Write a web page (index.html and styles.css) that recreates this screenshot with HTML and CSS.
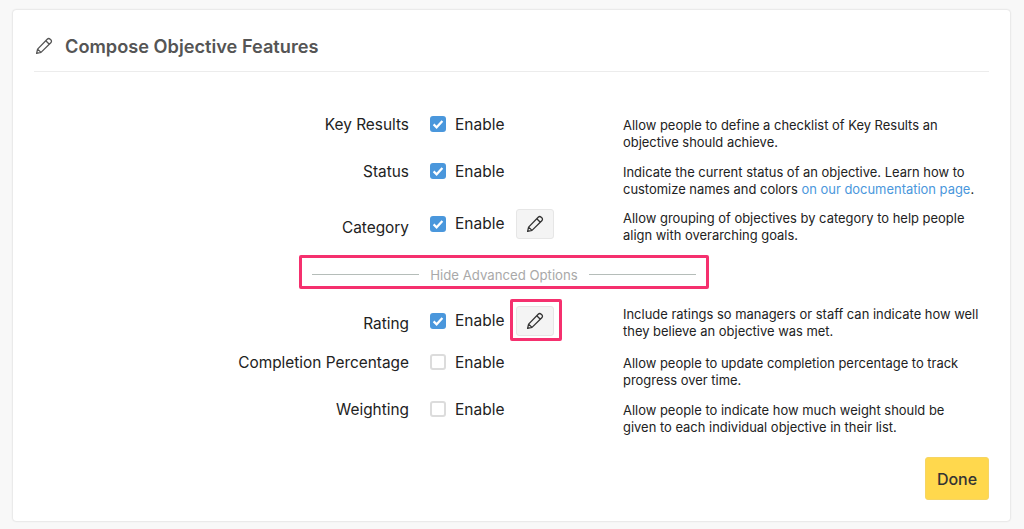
FILE: index.html
```html
<!DOCTYPE html>
<html lang="en">
<head>
    <meta charset="UTF-8">
    <title>Compose Objective Features</title>
    <link rel="stylesheet" href="styles.css">
</head>
<body>
    <svg class="icon-defs" width="0" height="0">
        <symbol id="pencil" viewBox="0 0 18 18">
            <path d="M1.6 16.4l1-4.3L12.2 2.2c.9-.9 2.1-.9 3 0l.6.6c.9.9.9 2.1 0 3L6 15.4z M2.6 12.1l3.4 3.3 M10.8 3.7l3.5 3.5" fill="none" stroke="currentColor" stroke-width="1.3" stroke-linejoin="round"/>
        </symbol>
        <symbol id="tick" viewBox="0 0 16 16">
            <path d="M3.6 8.4l3 2.9 5.8-6.4" fill="none" stroke="#fff" stroke-width="2.2"/>
        </symbol>
    </svg>
    <div class="card">
        <div class="card-header">
            <svg class="header-icon"><use href="#pencil"/></svg>
            <h1 class="card-title">Compose Objective Features</h1>
        </div>

        <div class="features">
            <div class="feature">
                <div class="feature-name">Key Results</div>
                <div class="feature-control">
                    <span class="checkbox checked"><svg><use href="#tick"/></svg></span>
                    <span class="enable">Enable</span>
                </div>
                <p class="feature-text">Allow people to define a checklist of Key Results an objective should achieve.</p>
            </div>
            <div class="feature status-row">
                <div class="feature-name">Status</div>
                <div class="feature-control">
                    <span class="checkbox checked"><svg><use href="#tick"/></svg></span>
                    <span class="enable">Enable</span>
                </div>
                <p class="feature-text">Indicate the current status of an objective. Learn how to customize names and colors <a href="#">on our documentation page</a>.</p>
            </div>
            <div class="feature has-edit">
                <div class="feature-name">Category</div>
                <div class="feature-control">
                    <span class="checkbox checked"><svg><use href="#tick"/></svg></span>
                    <span class="enable">Enable</span>
                    <button class="edit-button"><svg><use href="#pencil"/></svg></button>
                </div>
                <p class="feature-text">Allow grouping of objectives by category to help people align with overarching goals.</p>
            </div>

            <div class="advanced">
                <div class="advanced-toggle">
                    <span class="advanced-line"></span>
                    <span class="advanced-label">Hide Advanced Options</span>
                    <span class="advanced-line"></span>
                </div>
            </div>

            <div class="feature has-edit rating-row">
                <div class="feature-name">Rating</div>
                <div class="feature-control">
                    <span class="checkbox checked"><svg><use href="#tick"/></svg></span>
                    <span class="enable">Enable</span>
                    <button class="edit-button marked"><svg><use href="#pencil"/></svg></button>
                </div>
                <p class="feature-text">Include ratings so managers or staff can indicate how well they believe an objective was met.</p>
            </div>
            <div class="feature">
                <div class="feature-name">Completion Percentage</div>
                <div class="feature-control">
                    <span class="checkbox"></span>
                    <span class="enable">Enable</span>
                </div>
                <p class="feature-text">Allow people to update completion percentage to track progress over time.</p>
            </div>
            <div class="feature">
                <div class="feature-name">Weighting</div>
                <div class="feature-control">
                    <span class="checkbox"></span>
                    <span class="enable">Enable</span>
                </div>
                <p class="feature-text">Allow people to indicate how much weight should be<br>given to each individual objective in their list.</p>
            </div>
        </div>

        <div class="card-footer">
            <button class="done-button">Done</button>
        </div>
    </div>
</body>
</html>
```
FILE: styles.css
```css
html, body {
    height: 100%;
}
body {
    font-family: 'Inter', sans-serif;
    margin: 0;
    padding: 10px 14px 8px 13px;
    box-sizing: border-box;
    background-color: #f8f8f8;
    color: #222;
    overflow: hidden;
}
.icon-defs {
    position: absolute;
}
.card {
    height: 511px;
    box-sizing: border-box;
    padding: 0 21px;
    background-color: #fff;
    border-radius: 3px;
    box-shadow: 0 0 2px rgba(0,0,0,0.22);
}
.card-header {
    display: flex;
    align-items: center;
    height: 62px;
    box-sizing: border-box;
    padding-top: 10px;
    border-bottom: 1px solid #ececec;
}
.header-icon {
    width: 18px;
    height: 18px;
    margin-left: 1px;
    margin-right: 12px;
    color: #555;
}
.card-title {
    margin: 0;
    font-size: 18.2px;
    font-weight: 600;
    color: #555;
}
.features {
    padding-top: 45px;
}
.feature {
    display: grid;
    grid-template-columns: 375px 214px 1fr;
    height: 47px;
}
.status-row {
    height: 46px;
}
.rating-row {
    height: 49px;
}
.feature-name {
    margin-top: -4px;
    text-align: right;
    font-size: 15.4px;
    line-height: 24px;
}
.feature-control {
    display: flex;
    align-items: flex-start;
    margin-top: -4px;
    padding-left: 21px;
}
.has-edit .feature-control {
    margin-top: -1px;
    align-items: center;
    height: 30px;
}
.has-edit .feature-name {
    margin-top: 6px;
}
.rating-row .feature-control {
    margin-top: 0;
}
.checkbox {
    display: block;
    width: 16px;
    height: 16px;
    margin-top: 3px;
    box-sizing: border-box;
    border: 2px solid #dcdcdc;
    border-radius: 3px;
    background-color: #fff;
}
.has-edit .checkbox {
    margin-top: 0;
}
.checkbox.checked {
    border: 0;
    background-color: #4a97dc;
}
.checkbox svg {
    display: block;
    width: 16px;
    height: 16px;
}
.enable {
    margin-left: 9px;
    font-size: 15.5px;
    line-height: 24px;
}
.edit-button {
    position: relative;
    display: flex;
    align-items: center;
    justify-content: center;
    width: 38px;
    height: 30px;
    margin-left: 12px;
    padding: 0;
    background-color: #f4f4f4;
    border: 1px solid #e6e6e6;
    border-radius: 3px;
    color: #333;
}
.edit-button svg {
    width: 18px;
    height: 18px;
}
/* pinke Markierung liegt über dem Button */
.edit-button.marked::after {
    content: '';
    position: absolute;
    top: -8px;
    left: -7px;
    width: 46px;
    height: 36px;
    border: 3px solid #f5306e;
    border-radius: 2px;
}
.feature-text {
    margin: 0;
    font-size: 12.95px;
    line-height: 17px;
}
.feature-text a {
    color: #4a97dc;
    text-decoration: none;
}
.advanced {
    display: flex;
    justify-content: center;
    margin: -2px 0 17px;
    padding-right: 15px;
}
.advanced-toggle {
    display: flex;
    align-items: center;
    width: 410px;
    height: 34px;
    box-sizing: border-box;
    padding: 5px 10px 0;
    border: 3px solid #f5306e;
    border-radius: 2px;
}
.advanced-line {
    flex: 1;
    height: 1px;
    background-color: #b5bdb9;
}
.advanced-label {
    margin: 0 11px;
    font-size: 13.2px;
    color: #a9a9a9;
}
.card-footer {
    display: flex;
    justify-content: flex-end;
}
.done-button {
    width: 64px;
    height: 43px;
    margin-top: 8px;
    background-color: #ffd84d;
    border: 1px solid #f6d563;
    border-radius: 3px;
    font-family: inherit;
    font-size: 16px;
    font-weight: 500;
    color: #333;
}
```
